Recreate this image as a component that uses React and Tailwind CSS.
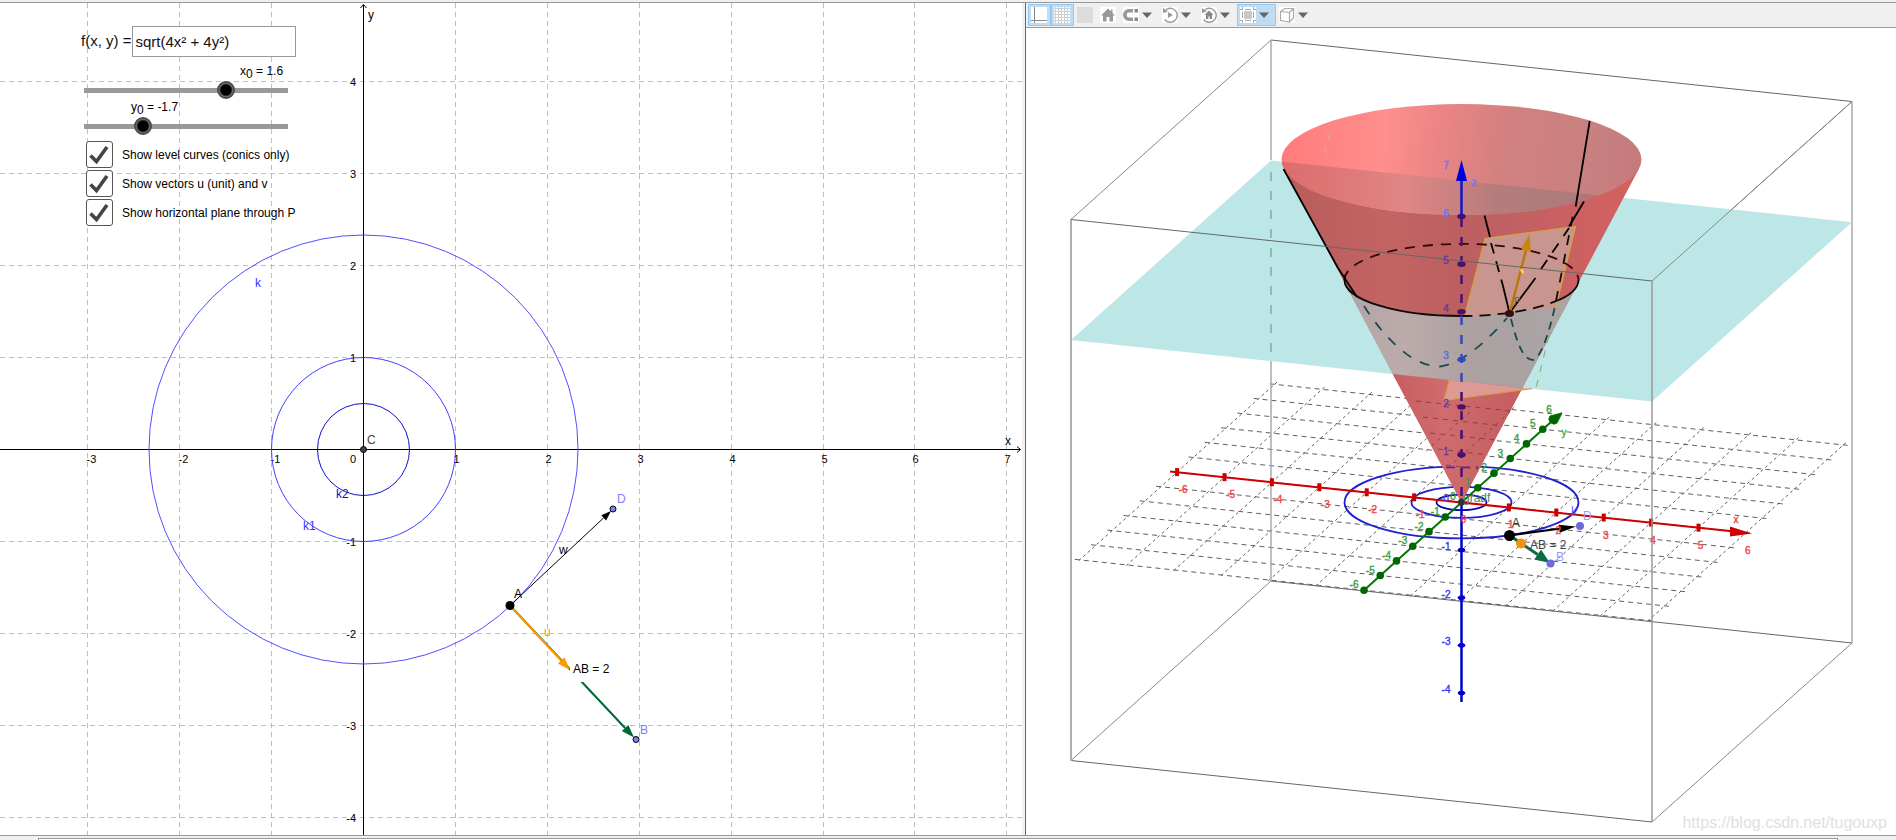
import React from "react";

const FONT = '"Liberation Sans", Arial, sans-serif';

/* ---------- 2D plot ---------- */

const OX = 363.5;
const OY = 449.5;
const UNIT = 91.9;
const gx = (n) => Math.floor(OX + n * UNIT) + 0.5;
const gy = (n) => Math.floor(OY - n * UNIT) + 0.5;
const range = (a, b) => Array.from({ length: b - a + 1 }, (_, i) => a + i);

function Arrow({ x1, y1, x2, y2, color, width = 1, head = 10, half = 3.5 }) {
  const len = Math.hypot(x2 - x1, y2 - y1);
  const ux = (x2 - x1) / len;
  const uy = (y2 - y1) / len;
  const bx = x2 - ux * head;
  const by = y2 - uy * head;
  return (
    <g>
      <line x1={x1} y1={y1} x2={bx} y2={by} stroke={color} strokeWidth={width} />
      <polygon
        points={`${x2},${y2} ${bx - uy * half},${by + ux * half} ${bx + uy * half},${by - ux * half}`}
        fill={color}
      />
    </g>
  );
}

function PlaneView() {
  return (
    <svg
      className="block h-full w-full"
      viewBox="0 3 1022 832"
      preserveAspectRatio="xMidYMid slice"
      fontFamily={FONT}
      fontSize="12"
      role="img"
      aria-label="Level curves"
    >
      <g stroke="#c0c0c0" strokeDasharray="5 4">
        {range(-3, 7).filter((n) => n !== 0).map((n) => (
          <line key={n} x1={gx(n)} x2={gx(n)} y1="3" y2="835" />
        ))}
        {range(-4, 4).filter((n) => n !== 0).map((n) => (
          <line key={n} x1="0" x2="1022" y1={gy(n)} y2={gy(n)} />
        ))}
      </g>
      <g stroke="#000" fill="none">
        <path d={`M${OX} 835V5M360.500 8L${OX} 4.500L366.500 8`} />
        <path d={`M0 ${OY}H1020M1017 446.500L1020.500 ${OY}L1017 452.500`} />
      </g>
      <g fill="#000" fontSize="11">
        {range(-3, 7).filter((n) => n !== 0).map((n) => (
          <text key={n} x={n < 0 ? gx(n) - 1 : gx(n) + 1} y="463" textAnchor={n < 0 ? "start" : "middle"}>
            {n}
          </text>
        ))}
        {range(-4, 4).filter((n) => n !== 0).map((n) => (
          <text key={n} x="356" y={gy(n) + 4} textAnchor="end">{n}</text>
        ))}
        <text x="350" y="463">0</text>
        <text x="1005" y="445" fontSize="12">x</text>
        <text x="368" y="19" fontSize="12">y</text>
      </g>
      <g fill="none">
        <circle cx={OX} cy={OY} r="214.500" stroke="#5050ff" />
        <circle cx={OX} cy={OY} r="92" stroke="#4040ff" />
        <circle cx={OX} cy={OY} r="46" stroke="#1010d0" />
      </g>
      <text x="255" y="287" fill="#3333ff">k</text>
      <text x="303" y="530" fill="#3333ff">k1</text>
      <text x="336" y="498" fill="#1010c0">k2</text>
      <circle cx={OX} cy={OY} r="3" fill="#444" stroke="#000" />
      <text x="367" y="444" fill="#444">C</text>

      <Arrow x1={510} y1={605.5} x2={611} y2={511} color="#000" />
      <Arrow x1={510} y1={605.5} x2={634} y2={737.5} color="#006633" width={2} head={13} half={4.5} />
      <rect x="570" y="660" width="46" height="22" fill="#fff" />
      <Arrow x1={510} y1={605.5} x2={570} y2={670} color="#ff9900" width={2} head={13} half={4.5} />
      <circle cx="510" cy="605.500" r="4.500" fill="#000" />
      <circle cx="613" cy="509" r="3" fill="#7d7dff" stroke="#000" />
      <circle cx="636" cy="739.500" r="3" fill="#7d7dff" stroke="#000" />
      <text x="514" y="598">A</text>
      <text x="559" y="554">w</text>
      <text x="617" y="503" fill="#7d7dff">D</text>
      <text x="640" y="734" fill="#7d7dff">B</text>
      <text x="544" y="636" fill="#ff9900">u</text>
      <text x="573" y="673">AB = 2</text>
    </svg>
  );
}

function SliderRow({ id, name, value, text, labelClass, inputLabel }) {
  return (
    <div className="flex flex-col gap-[3px]">
      <label htmlFor={id} className={`${labelClass} h-[15px] text-[12px] leading-4`}>
        {name}
        <sub className="text-[12px]">0</sub> = {text}
      </label>
      <input
        id={id}
        type="range"
        min="-4"
        max="4"
        step="0.1"
        defaultValue={value}
        aria-label={inputLabel}
        className="h-[18px] w-[218px] cursor-pointer appearance-none bg-[linear-gradient(#999,#999)] bg-[length:204px_5px] bg-center bg-no-repeat [&::-webkit-slider-thumb]:h-[18px] [&::-webkit-slider-thumb]:w-[18px] [&::-webkit-slider-thumb]:appearance-none [&::-webkit-slider-thumb]:rounded-full [&::-webkit-slider-thumb]:border-2 [&::-webkit-slider-thumb]:border-[#4d4d4d] [&::-webkit-slider-thumb]:bg-[radial-gradient(circle,#000_5px,#888_7px)]"
      />
    </div>
  );
}

function CheckRow({ label }) {
  return (
    <label className="flex h-[29px] items-center gap-[9px] text-[12px]">
      <span className="grid size-[27px] place-items-center">
        <input
          type="checkbox"
          defaultChecked
          className="peer col-start-1 row-start-1 size-[27px] appearance-none rounded-[3px] border border-[#555] bg-white"
        />
        <svg viewBox="0 0 27 27" className="pointer-events-none invisible col-start-1 row-start-1 size-[27px] peer-checked:visible">
          <path d="M4.500 14.500L10.500 20.500L21 6" fill="none" stroke="#444" strokeWidth="3.600" />
        </svg>
      </span>
      {label}
    </label>
  );
}

function Controls() {
  return (
    <form className="absolute top-[23px] left-[77px] flex flex-col" onSubmit={(e) => e.preventDefault()}>
      <div className="flex h-[31px] items-center gap-px pl-1 text-[15px]">
        <label htmlFor="fn" className="whitespace-nowrap text-[#111]">f(x, y) =</label>
        <input
          id="fn"
          type="text"
          defaultValue="sqrt(4x² + 4y²)"
          className="h-[31px] w-[164px] border border-[#999] bg-white px-0.5 text-[15px] text-[#111]"
        />
      </div>
      <div className="flex flex-col pt-[6px]">
        <SliderRow id="x0" name="x" value="1.6" text="1.6" labelClass="pl-[163px]" inputLabel="x0" />
        <SliderRow id="y0" name="y" value="-1.7" text="-1.7" labelClass="pl-[54px]" inputLabel="y0" />
      </div>
      <div className="flex flex-col pt-[5px] pl-[9px]">
        <CheckRow label="Show level curves (conics only)" />
        <CheckRow label="Show vectors u (unit) and v" />
        <CheckRow label="Show horizontal plane through P" />
      </div>
    </form>
  );
}

/* ---------- 3D view ---------- */

const P0 = [1461.5, 502.4];
const project = (x, y, z = 0) => [
  P0[0] + 47.4 * x + 16.25 * y,
  P0[1] + 5.05 * x - 14.63 * y - 47.65 * z,
];

function GridLine({ a, b, dash }) {
  return <line x1={a[0]} y1={a[1]} x2={b[0]} y2={b[1]} strokeDasharray={dash} />;
}

function AxisLabel({ x, y, color, children, size = 10 }) {
  return (
    <text x={x} y={y} textAnchor="middle" fill={color} fontSize={size} stroke={color} strokeWidth="0.400">
      {children}
    </text>
  );
}

function SpaceView() {
  const ticks = range(-6, 6);
  return (
    <svg
      className="block h-full w-full"
      viewBox="1026 28 870 807"
      preserveAspectRatio="xMidYMid slice"
      fontFamily={FONT}
      fontSize="12"
      role="img"
      aria-label="Graph of the function with its tangent plane"
    >
      <defs>
        <linearGradient id="inner" gradientUnits="userSpaceOnUse" x1="1281" x2="1642" y1="150" y2="185">
          <stop offset="0" stopColor="#ff7b7b" />
          <stop offset="0.280" stopColor="#ff8e8e" />
          <stop offset="0.420" stopColor="#ec8585" />
          <stop offset="0.620" stopColor="#d28080" />
          <stop offset="0.850" stopColor="#c98080" />
          <stop offset="1" stopColor="#c47a7a" />
        </linearGradient>
        <linearGradient id="innerTeal" gradientUnits="userSpaceOnUse" x1="1281" x2="1642" y1="0" y2="0">
          <stop offset="0" stopColor="#dc6c6c" />
          <stop offset="0.350" stopColor="#e08686" />
          <stop offset="0.600" stopColor="#b57c7c" />
          <stop offset="0.800" stopColor="#ae7a7a" />
          <stop offset="1" stopColor="#c06a6a" />
        </linearGradient>
        <linearGradient id="outer" gradientUnits="userSpaceOnUse" x1="1284" x2="1640" y1="0" y2="0">
          <stop offset="0" stopColor="#b85c5c" />
          <stop offset="0.300" stopColor="#c46464" />
          <stop offset="0.480" stopColor="#bb5f60" />
          <stop offset="0.700" stopColor="#c46163" />
          <stop offset="1" stopColor="#d66060" />
        </linearGradient>
        <linearGradient id="lower" gradientUnits="userSpaceOnUse" x1="1392" x2="1523" y1="0" y2="0">
          <stop offset="0" stopColor="#c65e60" />
          <stop offset="0.400" stopColor="#d06c6e" />
          <stop offset="0.700" stopColor="#c86466" />
          <stop offset="1" stopColor="#c65c5e" />
        </linearGradient>
        <linearGradient id="grey" gradientUnits="userSpaceOnUse" x1="1346" x2="1577" y1="0" y2="0">
          <stop offset="0" stopColor="#b2a5a5" />
          <stop offset="0.250" stopColor="#bcabab" />
          <stop offset="0.550" stopColor="#aba1a1" />
          <stop offset="1" stopColor="#aaa5a5" />
        </linearGradient>
        <clipPath id="rim">
          <ellipse cx="1461.500" cy="159.600" rx="180" ry="55.500" />
        </clipPath>
      </defs>

      {/* floor grid */}
      <g stroke="#606060" strokeWidth="1">
        {ticks.map((n) => (
          <GridLine key={`x${n}`} a={project(-6.1, n)} b={project(6.1, n)} dash="5 4" />
        ))}
        {ticks.map((n) => (
          <GridLine key={`y${n}`} a={project(n, -6.05)} b={project(n, 6.15)} dash="3 3" />
        ))}
      </g>

      {/* rear box edges */}
      <g fill="none">
        <path d="M1071 219.500L1271 40M1652 281L1852 101.500M1071 760.500L1271 581M1652 822L1852 643" stroke="#888" />
        <path d="M1271 40L1852 101.500M1271 581L1852 643M1071 760.500L1652 822" stroke="#666" />
        <path d="M1271 40V160M1271 360V581M1852 101V643M1071 219V761" stroke="#aaa" strokeWidth="1.500" />
      </g>

      {/* level curves on the floor */}
      <g fill="none" stroke="#2020d0" strokeWidth="1.800">
        <ellipse cx="1461.500" cy="502.400" rx="117" ry="36" />
        <ellipse cx="1461.500" cy="502.400" rx="50" ry="15.500" />
        <ellipse cx="1461.500" cy="502.400" rx="25" ry="7.700" stroke="#0808a0" />
      </g>

      {/* x axis */}
      <g stroke="#cc0000" strokeWidth="2" fill="#cc0000">
        <line x1="1170" y1="471.500" x2="1732" y2="531.300" />
        {range(-6, 5).filter((n) => n !== 0).map((n) => {
          const [x, y] = project(n, 0);
          return <line key={n} x1={x} x2={x} y1={y - 4} y2={y + 4} strokeWidth="4" />;
        })}
        <polygon points="1752,533.500 1730,526.500 1730,536.500" stroke="none" />
      </g>

      {/* z axis, lower part */}
      <g stroke="#0000cc" fill="#0000cc">
        <line x1="1461.500" x2="1461.500" y1="502" y2="702" strokeWidth="2.500" />
        {range(-4, -1).map((n) => (
          <ellipse key={n} cx="1461.500" cy={project(0, 0, n)[1]} rx="3.500" ry="1.800" />
        ))}
      </g>

      {/* horizontal plane */}
      <polygon points="1271,160.500 1852,222.200 1652,401.500 1071,340" fill="#bde7e6" />
      <path d="M1271 172V355" stroke="#8fb3b3" strokeWidth="1.800" strokeDasharray="9 10" fill="none" />
      <path d="M1071 219.500V761" stroke="#aaa" strokeWidth="1.500" />

      {/* cone */}
      <polygon points="1283.900,168.600 1639.100,168.600 1461.500,502.400" fill="url(#outer)" />
      <polygon points="1392.600,374 1522.400,387.800 1461.500,502.400" fill="url(#lower)" />
      <path d="M1346 285.700A117 36 0 0 0 1577 285.700L1522.400 387.800L1392.600 374Z" fill="url(#grey)" />
      <ellipse cx="1461.500" cy="159.600" rx="180" ry="55.500" fill="url(#inner)" />
      <polygon points="1271,160.500 1852,222.200 1852,260 1271,260" fill="url(#innerTeal)" clipPath="url(#rim)" />
      <path d="M1328 134l2 7M1324 147l2 7" stroke="#e0a0a0" strokeWidth="1.500" />

      {/* grid seen through the cone tip */}
      <g stroke="#7c3838" strokeDasharray="5 5" opacity="0.800">
        <path d="M1416 401l95 10M1423 417l80 9M1430 433l66 7M1438 449l50 6M1446 465l32 4" />
        <path d="M1470 412l-44 39M1510 412l-60 54" strokeDasharray="3 5" />
      </g>
      <path d="M1446 467.300h32" stroke="#6020a0" strokeWidth="1.800" strokeDasharray="9 6" />

      {/* tangent plane */}
      <polygon points="1485,238.500 1575.500,226.500 1556,307 1464,318.500" fill="#c8968f" />
      <polygon points="1449.500,380 1530,388.700 1444,400.300" fill="#dd9a94" />
      <g fill="none" stroke="#d9a240" strokeWidth="1.200">
        <path d="M1464 318.500L1485 238.500L1575.500 226.500L1556 307" />
        <path d="M1449.500 380L1444 400.300L1532 388.700" />
        <path d="M1464 318.500L1449.500 380M1556 307L1536 388" stroke="#a3a878" strokeDasharray="7 8" />
      </g>

      {/* intersection circle */}
      <g fill="none" stroke="#0a0a0a" strokeWidth="1.800">
        <path d="M1344.500 279.900A117 36 0 0 1 1578.500 279.900" stroke="#350808" strokeDasharray="10 8" />
        <path d="M1344.500 275V279.900A117 36 0 0 0 1461.500 316" />
        <path d="M1461.500 316A117 36 0 0 0 1556 301" strokeDasharray="11 7" />
        <path d="M1556 301C1570 296 1578.500 288 1578.500 279.900" />
      </g>

      {/* vertical section curves */}
      <g fill="none" stroke="#000" strokeWidth="1.800">
        <path d="M1283.500 169L1338 268L1357 297" />
        <path d="M1364 306C1383 336 1412 367 1440 366.500C1462 364 1488 340 1507 318" stroke="#1d4a50" strokeDasharray="10 10" />
        <path d="M1511 319C1516 338 1522 360 1533 360C1541 358 1550 330 1555 306" stroke="#1d4a50" strokeDasharray="8 6" />
        <path d="M1556 301L1573 215" strokeDasharray="10 9" stroke="#1d0808" />
        <path d="M1575.700 206.500L1589.700 121" />
        <path d="M1484.500 215.500L1490 237M1503 286L1509.500 313M1509.500 313L1535.500 278M1569 226.500L1584 201.500" />
        <path d="M1491 243L1503 286" strokeDasharray="11 8" />
        <path d="M1541 269L1569 228" strokeDasharray="11 9" />
      </g>

      {/* z axis inside and above the cone */}
      <g stroke="#4a1070" strokeWidth="2.500" fill="#4a1070">
        <path d="M1461.500 218V313M1461.500 392V497" strokeDasharray="9 10" />
        <path d="M1461.500 316V390" stroke="#3a48c0" strokeDasharray="9 10" />
        {[1, 2, 3, 4, 5, 6].map((n) => (
          <ellipse key={n} cx="1461.500" cy={project(0, 0, n)[1]} rx="3" ry="1.500" stroke={n === 3 ? "#3a48c0" : "#4a1070"} />
        ))}
        <path d="M1461.500 216V180" stroke="#1414cc" />
        <polygon points="1461.500,160 1456,181 1467,181" fill="#0000dd" stroke="none" />
      </g>

      {/* gradient arrow and point P */}
      <line x1="1510" y1="312" x2="1526" y2="250" stroke="#b8780c" strokeWidth="2.500" />
      <polygon points="1529.500,234 1521,249 1531,251.500" fill="#c8860f" />
      <path d="M1521 269l2 4" stroke="#ffd080" strokeWidth="2.500" />
      <ellipse cx="1509.500" cy="313.500" rx="4.500" ry="3.500" fill="#351010" />

      {/* box edges in front */}
      <path d="M1071 219.500L1652 281" stroke="#626868" fill="none" />
      <path d="M1652 281V822" stroke="#999" strokeWidth="1.500" />
      <path d="M1652 281L1852 101.500" stroke="#888" />

      {/* y axis */}
      <g stroke="#007700" strokeWidth="2" fill="#006600">
        <line x1="1364" y1="590.200" x2="1556" y2="417.500" />
        {range(-6, 5).filter((n) => n !== 0).map((n) => {
          const [x, y] = project(0, n);
          return <circle key={n} cx={x} cy={y} r="3.800" stroke="none" />;
        })}
        <path d="M1562 413L1557 423A5 5 0 0 1 1550 416Z" strokeWidth="1" />
      </g>

      {/* floor vectors and points */}
      <Arrow x1={1509.5} y1={535.3} x2={1576} y2={526.5} color="#000" width={2.2} head={17} half={4} />
      <Arrow x1={1509.5} y1={535.3} x2={1550} y2={563} color="#0f6b45" width={3} head={15} half={6} />
      <circle cx="1521" cy="543.500" r="5" fill="#ee950f" />
      <circle cx="1509.500" cy="535.500" r="5.500" fill="#000" />
      <circle cx="1580" cy="526" r="4" fill="#6b6bdc" />
      <circle cx="1550.500" cy="563.500" r="4" fill="#6b6bdc" />
      <circle cx="1461.500" cy="502" r="3.500" fill="#333" />

      {/* labels */}
      {range(-6, 6).map((n) => {
        const [x, y] = project(n, 0);
        return <AxisLabel key={n} x={n < 0 ? x + 6 : x + 2} y={y + 21} color="#f04848">{n}</AxisLabel>;
      })}
      {range(-6, 6).filter((n) => n !== 0).map((n) => {
        const [x, y] = project(0, n);
        return <AxisLabel key={n} x={x - 10} y={y - 2} color="#3f9f3f">{n}</AxisLabel>;
      })}
      {range(-4, 7).filter((n) => n !== 0).map((n) => (
        <AxisLabel
          key={n}
          x="1446"
          y={project(0, 0, n)[1]}
          color={n < 0 ? "#3a3af0" : n === 7 || n === 6 ? "#7070ff" : n === 3 ? "#5c70d0" : "#6a3a98"}
        >
          {n}
        </AxisLabel>
      ))}
      <AxisLabel x="1446" y="502" color="#4a4af0">0</AxisLabel>
      <AxisLabel x="1453" y="500" color="#3f9f3f">0</AxisLabel>
      <AxisLabel x="1736" y="523" color="#f04848">x</AxisLabel>
      <AxisLabel x="1564" y="436" color="#4cae4c">y</AxisLabel>
      <AxisLabel x="1474" y="186" color="#7474ff">z</AxisLabel>
      <text x="1463" y="502" fill="#4f8068" fontSize="12">gradf</text>
      <text x="1512" y="527" fill="#333">A</text>
      <text x="1530" y="549" fill="#444">AB = 2</text>
      <text x="1583" y="520" fill="#9c9cff">D</text>
      <text x="1556" y="561" fill="#9c9cff">B</text>
      <text x="1571" y="515" fill="#5c5cff">k</text>
      <text x="1514" y="305" fill="#8a5048" fontSize="10">P</text>
      <text x="1887" y="828" textAnchor="end" fill="#e0e0e0" fontSize="16">
        https://blog.csdn.net/tugouxp
      </text>
    </svg>
  );
}

/* ---------- toolbar ---------- */

const HOUSE = "M8 1.500L1 8.500H3V14.500H6.500V10H9.500V14.500H13V8.500H15L12.500 6V2.500H11V4.500Z";

function Icon({ children, white = true }) {
  return (
    <svg viewBox="0 0 16 16" className={`size-4 shrink-0 ${white ? "bg-white" : "bg-[#dcdcdc]"}`} aria-hidden="true">
      {children}
    </svg>
  );
}

function ToolButton({ label, active, menu, children }) {
  return (
    <button
      type="button"
      aria-label={label}
      aria-pressed={active ? true : undefined}
      className={`flex h-[22px] shrink-0 items-center gap-[3px] border px-0.5 ${menu ? "w-[39px]" : "w-[23px]"} ${
        active ? "border-[#90c8f6] bg-[#c0dcf3]" : "border-transparent"
      }`}
    >
      {children}
      {menu && (
        <svg viewBox="0 0 10 6" className="h-[6px] w-[10px] shrink-0" aria-hidden="true">
          <path d="M0 0.500H10L5 6Z" fill="#666" />
        </svg>
      )}
    </button>
  );
}

function Toolbar() {
  return (
    <div role="toolbar" aria-label="3D view" className="flex h-[25px] items-center border-b border-[#999] bg-[#f0f0f0] pl-0.5">
      <ToolButton label="Axes" active>
        <Icon><path d="M3.500 0V16M0 13.500H16" stroke="#888" fill="none" /></Icon>
      </ToolButton>
      <ToolButton label="Grid" active>
        <Icon>
          <path d="M1.500 0V16M4.500 0V16M7.500 0V16M10.500 0V16M13.500 0V16M0 1.500H16M0 4.500H16M0 7.500H16M0 10.500H16M0 13.500H16" stroke="#d0d0d0" fill="none" />
        </Icon>
      </ToolButton>
      <ToolButton label="Plane"><Icon white={false} /></ToolButton>
      <ToolButton label="Standard view">
        <Icon><path d={HOUSE} fill="#999" /></Icon>
      </ToolButton>
      <ToolButton label="Point capturing" menu>
        <Icon>
          <path d="M10 3.800H6A4.200 4.200 0 0 0 6 12.200H10" fill="none" stroke="#999" strokeWidth="3.600" />
          <path d="M11.500 2H15V5.600H11.500ZM11.500 10.400H15V14H11.500Z" fill="#888" />
        </Icon>
      </ToolButton>
      <ToolButton label="Rotate view" menu>
        <Icon>
          <path d="M4 2.700A7 7 0 1 1 2.600 12.500" fill="none" stroke="#999" strokeWidth="1.400" />
          <path d="M1 1V6L6 4.500Z" fill="#999" />
          <path d="M6 5V11L11 8Z" fill="#999" />
        </Icon>
      </ToolButton>
      <ToolButton label="View direction" menu>
        <Icon>
          <path d="M4 2.700A7 7 0 1 1 2.600 12.500" fill="none" stroke="#999" strokeWidth="1.400" />
          <path d="M1 1V6L6 4.500Z" fill="#999" />
          <path d="M8 3.500L3.500 8H5V12H7.300V9.500H8.700V12H11V8H12.500Z" fill="#888" />
        </Icon>
      </ToolButton>
      <ToolButton label="Clipping" active menu>
        <Icon>
          <path d="M0 2.500H3M5 2.500H11M13 2.500H16M0 13.500H3M5 13.500H11M13 13.500H16M2.500 0V3M13.500 0V3M2.500 5V11M13.500 5V11M2.500 13V16M13.500 13V16" stroke="#aaa" fill="none" />
          <rect x="4" y="4" width="8" height="8" fill="#c8c8c8" />
        </Icon>
      </ToolButton>
      <ToolButton label="Projection" menu>
        <Icon>
          <path d="M1.500 4.500L6 1.500H14.500V11L10.500 15L1.500 13.500ZM1.500 4.500L10.500 5.500V15M10.500 5.500L14.500 1.500" stroke="#aaa" strokeWidth="1.200" fill="none" />
        </Icon>
      </ToolButton>
    </div>
  );
}

export default function App() {
  return (
    <div className="flex h-screen flex-col overflow-hidden bg-[#f0f0f0] pt-0.5 font-['Liberation_Sans',Arial,sans-serif] text-black">
      <main className="flex min-h-0 flex-1 border-y border-[#999]">
        <section className="relative min-w-0 flex-[1022] bg-white">
          <PlaneView />
          <Controls />
        </section>
        <div className="w-1 shrink-0 border-r border-[#666] bg-[#f0f0f0]" />
        <section className="flex min-w-0 flex-[870] flex-col bg-white">
          <Toolbar />
          <div className="min-h-0 flex-1">
            <SpaceView />
          </div>
        </section>
      </main>
      <footer className="h-1 shrink-0 pt-0.5 pr-[58px] pl-[38px]">
        <div className="h-0.5 border border-b-0 border-[#999] bg-white" />
      </footer>
    </div>
  );
}
